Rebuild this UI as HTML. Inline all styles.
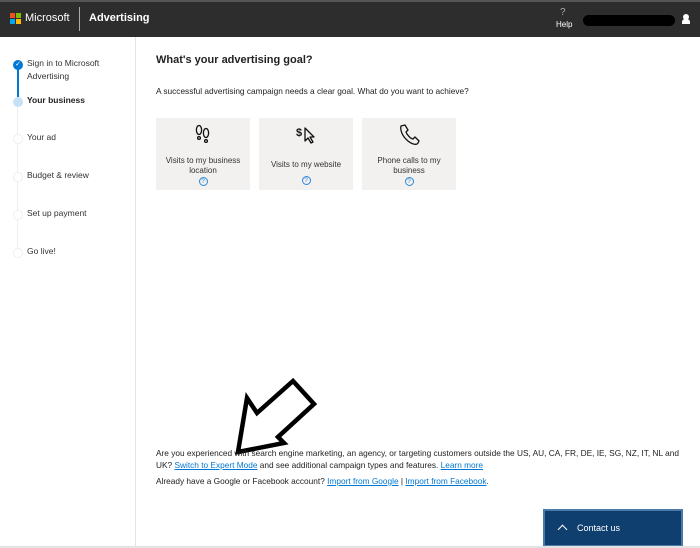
<!DOCTYPE html>
<html><head><style>
*{margin:0;padding:0;box-sizing:border-box}
body{width:700px;height:548px;overflow:hidden;background:#fff;font-family:"Liberation Sans",sans-serif;color:#222;position:relative}
.hdr{position:absolute;left:0;top:0;width:700px;height:37px;background:#2d2d2d;border-top:2px solid #555}
.side{position:absolute;left:0;top:37px;width:136px;height:511px;border-right:1px solid #e3e3e3}
.step{position:absolute;left:27px;font-size:8.5px;color:#333;line-height:12.5px}
.dot{position:absolute;left:13px;width:10px;height:10px;border-radius:50%;background:#fff;border:1px solid #eee}
.card{position:absolute;top:118px;width:94px;height:72px;background:#f2f1f0;text-align:center;font-size:8px;color:#333;line-height:10px}
.q{display:inline-block;width:9px;height:9px;border:1px solid #2b88d8;border-radius:50%;color:#2b88d8;font-size:6.5px;line-height:7px}
.txt{position:absolute;left:156px;font-size:8.3px;color:#222;line-height:12px}
a{color:#0078d4;text-decoration:underline}
</style></head><body>
<div class="hdr">
 <div style="position:absolute;left:10px;top:11px;width:11px;height:11px">
  <div style="position:absolute;left:0;top:0;width:5px;height:5px;background:#f25022"></div>
  <div style="position:absolute;left:6px;top:0;width:5px;height:5px;background:#7fba00"></div>
  <div style="position:absolute;left:0;top:6px;width:5px;height:5px;background:#00a4ef"></div>
  <div style="position:absolute;left:6px;top:6px;width:5px;height:5px;background:#ffb900"></div>
 </div>
 <div style="position:absolute;left:25px;top:10px;color:#fff;font-size:11px">Microsoft</div>
 <div style="position:absolute;left:79px;top:5px;width:1px;height:24px;background:#aaa"></div>
 <div style="position:absolute;left:89px;top:10px;color:#fff;font-size:11px;font-weight:bold">Advertising</div>
 <div style="position:absolute;left:560px;top:5px;color:#aaa;font-size:10px">?</div>
 <div style="position:absolute;left:556px;top:18px;color:#fff;font-size:8px">Help</div>
 <div style="position:absolute;left:583px;top:13px;width:92px;height:11px;border-radius:6px;background:#000"></div>
 <div style="position:absolute;left:683px;top:12px;width:6px;height:6px;border-radius:50%;background:#fff"></div>
 <div style="position:absolute;left:682px;top:17px;width:8px;height:5px;border-radius:3px 3px 0 0;background:#fff"></div>
</div>
<div class="side">
 <div style="position:absolute;left:17px;top:28px;width:2px;height:32px;background:#0078d4"></div>
 <div style="position:absolute;left:17px;top:68px;width:1px;height:150px;background:#eee"></div>
 <div class="dot" style="top:23px;background:#0078d4;border-color:#0078d4;color:#fff;font-size:7px;line-height:8px;text-align:center">✓</div>
 <div class="dot" style="top:60px;background:#c7e0f4;border-color:#c7e0f4"></div>
 <div class="dot" style="top:97px"></div><div class="dot" style="top:135px"></div><div class="dot" style="top:173px"></div><div class="dot" style="top:211px"></div>
 <div class="step" style="top:20px">Sign in to Microsoft<br>Advertising</div>
 <div class="step" style="top:57px;font-weight:bold;color:#222">Your business</div>
 <div class="step" style="top:94px">Your ad</div>
 <div class="step" style="top:132px">Budget &amp; review</div>
 <div class="step" style="top:170px">Set up payment</div>
 <div class="step" style="top:208px">Go live!</div>
</div>
<div style="position:absolute;left:156px;top:54px;font-size:11px;font-weight:bold;color:#222">What's your advertising goal?</div>
<div class="txt" style="top:85px">A successful advertising campaign needs a clear goal. What do you want to achieve?</div>
<div class="card" style="left:156px"><div style="height:38px"></div>Visits to my business<br>location<br><span class="q">?</span></div>
<div class="card" style="left:259px"><div style="height:42px"></div>Visits to my website<div style="height:5px"></div><span class="q">?</span></div>
<div class="card" style="left:362px"><div style="height:38px"></div>Phone calls to my<br>business<br><span class="q">?</span></div>
<svg style="position:absolute;left:0;top:0" width="700" height="548" fill="none" stroke="#111" stroke-width="1.3">
 <ellipse cx="199" cy="130" rx="2.6" ry="4.5"/><circle cx="199" cy="138" r="1.4"/>
 <ellipse cx="206" cy="133" rx="2.6" ry="4.5"/><circle cx="206" cy="141" r="1.4"/>
 <text x="296" y="136" font-family="Liberation Sans" font-size="11" font-weight="bold" fill="#111" stroke="none">$</text>
 <path d="M305 128 L305 141 L308 138 L311 143 L313 142 L310 137 L314 137 Z" stroke-linejoin="round"/>
 <path d="M401 126 C400 130 402 136 408 141 C413 145 417 145 418 143 L419 141 L415 137 L413 139 C411 139 407 135 406 132 L408 130 L405 125 Z" stroke-linejoin="round"/>
 <polygon points="238,452 247,398 257,413 293,381 314,404 278,437 284,443" fill="#fff" stroke="#000" stroke-width="4.5"/>
</svg>
<div class="txt" style="top:447px;width:530px">Are you experienced with search engine marketing, an agency, or targeting customers outside the US, AU, CA, FR, DE, IE, SG, NZ, IT, NL and UK? <a>Switch to Expert Mode</a> and see additional campaign types and features. <a>Learn more</a></div>
<div class="txt" style="top:475px">Already have a Google or Facebook account? <a>Import from Google</a> | <a>Import from Facebook</a>.</div>
<div style="position:absolute;left:543px;top:509px;width:140px;height:38px;background:#0f3f6e;border:2px solid #4a7ba8;color:#fff;font-size:9px;line-height:34px;padding-left:32px">Contact us</div>
<div style="position:absolute;left:559px;top:526px;width:7px;height:7px;border-left:1px solid #fff;border-top:1px solid #fff;transform:rotate(45deg)"></div>
<div style="position:absolute;left:0;top:546px;width:700px;height:2px;background:#e3e3e3"></div>
</body></html>
